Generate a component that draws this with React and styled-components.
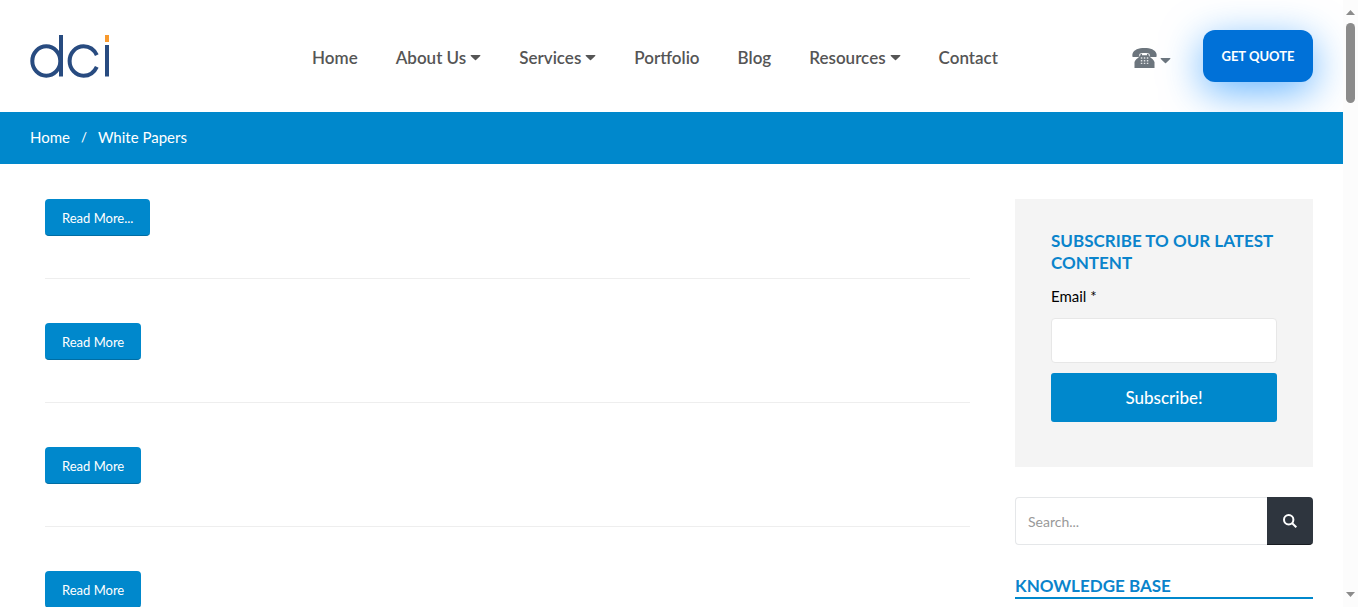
import React from 'react';
import styled, { createGlobalStyle } from 'styled-components';

const blue = '#0088cc';

const GlobalStyle = createGlobalStyle`
  *, *::before, *::after { box-sizing: border-box; }
  body {
    margin: 0;
    background: #fff;
    color: #000;
    font-family: Lato, "Open Sans", sans-serif;
    font-size: 15px;
    line-height: 22px;
  }
  button, input { font-family: inherit; margin: 0; }
  a { text-decoration: none; color: inherit; }
`;

const Shell = styled.div`
  display: flex;
  height: 100vh;
  overflow: hidden;
`;

const Page = styled.div`
  flex: 1;
  min-width: 0;
  overflow: hidden;
`;

const Header = styled.header`
  display: flex;
  align-items: center;
  height: 112px;
  padding: 0 30px;
`;

const Logo = styled.a`
  display: block;
  width: 80px;
  padding-top: 2px;
`;

const Nav = styled.nav`
  flex: 1;
  display: flex;
  justify-content: center;
  gap: 38px;
  padding: 3px 0 0 68px;
`;

const NavLink = styled.a`
  display: flex;
  align-items: center;
  gap: 4px;
  color: #555;
  font-size: 17px;
  font-weight: 600;
  white-space: nowrap;
`;

const PhoneButton = styled.button`
  display: flex;
  align-items: center;
  gap: 3px;
  padding: 4px 0 0;
  border: 0;
  background: none;
  color: #6c757d;

  svg + svg { margin-top: 5px; }
`;

const QuoteButton = styled.button`
  width: 110px;
  height: 52px;
  margin-left: 32px;
  padding: 0;
  border: 0;
  border-radius: 12px;
  background: #0071d8;
  box-shadow: 0 10px 40px rgba(0, 132, 255, 0.6);
  color: #fff;
  font-size: 13px;
  font-weight: 700;
`;

const Breadcrumb = styled.nav`
  position: relative;
  display: flex;
  align-items: center;
  gap: 11px;
  height: 52px;
  padding: 0 30px 2px;
  background: ${blue};
  color: #fff;
`;

const Separator = styled.span`
  font-size: 13px;
  font-weight: 500;
`;

const Main = styled.main`
  display: grid;
  grid-template-columns: minmax(0, 1fr) 298px;
  gap: 45px;
  padding: 35px 30px 0 45px;
`;

const Article = styled.article`
  padding-bottom: 42px;
  margin-bottom: 44px;
  border-bottom: 1px solid #eee;
`;

const ReadMore = styled.a`
  display: block;
  width: fit-content;
  padding: 8px 17px 6px;
  border: 0 solid #006da3;
  border-bottom-width: 1px;
  border-radius: 4px;
  background: ${blue};
  color: #fff;
  font-size: 13px;
`;

const SubscribeCard = styled.form`
  display: flex;
  flex-direction: column;
  padding: 31px 36px 45px;
  background: #f4f4f4;
`;

const Heading = styled.h2`
  margin: 0;
  color: #0a84cc;
  font-size: 17px;
  font-weight: 700;
  line-height: 22px;
`;

const Label = styled.label`
  margin: 11px 0;
`;

const EmailInput = styled.input`
  width: 100%;
  height: 45px;
  margin-bottom: 10px;
  padding: 0 12px;
  border: 1px solid #e7e7e7;
  border-radius: 4px;
  background: #fff;
`;

const SubscribeButton = styled.button`
  height: 49px;
  border: 0;
  border-radius: 3px;
  background: ${blue};
  color: #fff;
  font-size: 17px;
  font-weight: 500;
`;

const SearchForm = styled.form`
  display: flex;
  height: 48px;
  margin: 30px 0;
`;

const SearchInput = styled.input`
  flex: 1;
  min-width: 0;
  padding: 0 12px;
  border: 1px solid #e5e7e9;
  border-right: 0;
  border-radius: 4px 0 0 4px;
  font-size: 14px;
  &::placeholder { color: #999; }
`;

const SearchButton = styled.button`
  display: flex;
  align-items: center;
  justify-content: center;
  width: 46px;
  padding: 0;
  border: 0 solid #181c21;
  border-bottom-width: 1px;
  border-radius: 0 4px 4px 0;
  background: #2e353e;
  color: #fff;
`;

const SectionHeading = styled(Heading)`
  border-bottom: 2px solid ${blue};
`;

const ScrollTrack = styled.div`
  display: flex;
  flex-direction: column;
  align-items: center;
  width: 15px;
  padding: 10px 0 10px;
  background: #fcfcfc;
  color: #8b8b8b;
`;

const ScrollThumb = styled.div`
  width: 9px;
  height: 80px;
  margin: 8px 0 auto;
  border-radius: 5px;
  background: #8b8b8b;
`;

function LogoMark() {
  return (
    <svg width="80" height="44" viewBox="0 0 80 44" display="block" fill="none" stroke="#284b80" strokeWidth="4">
      <ellipse cx="16.3" cy="26" rx="14" ry="14.7" />
      <path d="M31 0V41.5" />
      <path d="M66.8 20.2C64.2 14.7 59.4 11.3 53.6 11.3C45.8 11.3 39.6 17.8 39.6 26S45.8 40.7 53.6 40.7C59.4 40.7 64.2 37.3 66.8 31.8" />
      <path d="M77 10V41.5" />
      <path d="M77 0V7" stroke="#f8992d" />
    </svg>
  );
}

function Caret() {
  return (
    <svg width="11" height="8" viewBox="0 0 11 8" fill="currentColor" aria-hidden="true">
      <path d="M1 1H10Q10.8 1.2 10.2 1.9L6 6.1Q5.5 6.5 5 6.1L.8 1.9Q.2 1.2 1 1Z" />
    </svg>
  );
}

function Telephone() {
  return (
    <svg width="25" height="20" viewBox="0 0 25 20" aria-hidden="true">
      <path
        fill="currentColor"
        d="M12.5 0C18.5 0 23.2 1.8 24.4 5.5C24.8 7 24.7 8.4 24.3 9H18.3C17.6 8 17.9 6.7 17.3 5.8C16.2 4.8 8.8 4.8 7.7 5.8C7.1 6.7 7.4 8 6.7 9H.7C.3 8.4.2 7 .6 5.5C1.8 1.8 6.5 0 12.5 0Z"
      />
      <path
        fill="currentColor"
        d="M8.5 6H10V7.2H15V6H16.5V7.2C17.2 7.4 17.6 8 18 9C19 10.3 22 11.6 22.5 14V20H2.5V14C3 11.6 6 10.3 7 9C7.4 8 7.8 7.4 8.5 7.2Z"
      />
      <path
        stroke="#fff"
        strokeWidth="1.4"
        strokeDasharray="1.5 1.5"
        strokeOpacity=".8"
        d="M8.8 10H16.4M8.8 12.7H16.4M8.8 15.4H16.4"
      />
    </svg>
  );
}

function SearchIcon() {
  return (
    <svg width="14" height="14" viewBox="0 0 14 14" fill="none" stroke="currentColor" strokeWidth="2" aria-hidden="true">
      <circle cx="5.7" cy="5.7" r="4.7" />
      <path d="M9.2 9.2L13.3 13.3" />
    </svg>
  );
}

function ScrollArrow({ down }) {
  return (
    <svg width="9" height="5" viewBox="0 0 9 5" fill="currentColor" aria-hidden="true">
      <path d={down ? 'M0 0H9L4.5 5Z' : 'M0 5H9L4.5 0Z'} />
    </svg>
  );
}

const links = [
  { text: 'Home' },
  { text: 'About Us', menu: true },
  { text: 'Services', menu: true },
  { text: 'Portfolio' },
  { text: 'Blog' },
  { text: 'Resources', menu: true },
  { text: 'Contact' },
];

const articles = ['Read More...', 'Read More', 'Read More', 'Read More'];

export default function App() {
  return (
    <Shell>
      <GlobalStyle />
      <Page>
        <Header>
          <Logo href="#" aria-label="dci">
            <LogoMark />
          </Logo>
          <Nav>
            {links.map((link) => (
              <NavLink href="#" key={link.text}>
                {link.text}
                {link.menu && <Caret />}
              </NavLink>
            ))}
          </Nav>
          <PhoneButton type="button" aria-label="Phone">
            <Telephone />
            <Caret />
          </PhoneButton>
          <QuoteButton type="button">GET QUOTE</QuoteButton>
        </Header>
        <Breadcrumb>
          <a href="#">Home</a>
          <Separator>/</Separator>
          <span>White Papers</span>
        </Breadcrumb>
        <Main>
          <div>
            {articles.map((text, i) => (
              <Article key={i}>
                <ReadMore href="#">{text}</ReadMore>
              </Article>
            ))}
          </div>
          <aside>
            <SubscribeCard>
              <Heading>SUBSCRIBE TO OUR LATEST CONTENT</Heading>
              <Label htmlFor="email">Email *</Label>
              <EmailInput id="email" type="email" />
              <SubscribeButton type="button">Subscribe!</SubscribeButton>
            </SubscribeCard>
            <SearchForm>
              <SearchInput type="text" placeholder="Search..." aria-label="Search" />
              <SearchButton type="button" aria-label="Search">
                <SearchIcon />
              </SearchButton>
            </SearchForm>
            <SectionHeading>KNOWLEDGE BASE</SectionHeading>
          </aside>
        </Main>
      </Page>
      <ScrollTrack aria-hidden="true">
        <ScrollArrow />
        <ScrollThumb />
        <ScrollArrow down />
      </ScrollTrack>
    </Shell>
  );
}
